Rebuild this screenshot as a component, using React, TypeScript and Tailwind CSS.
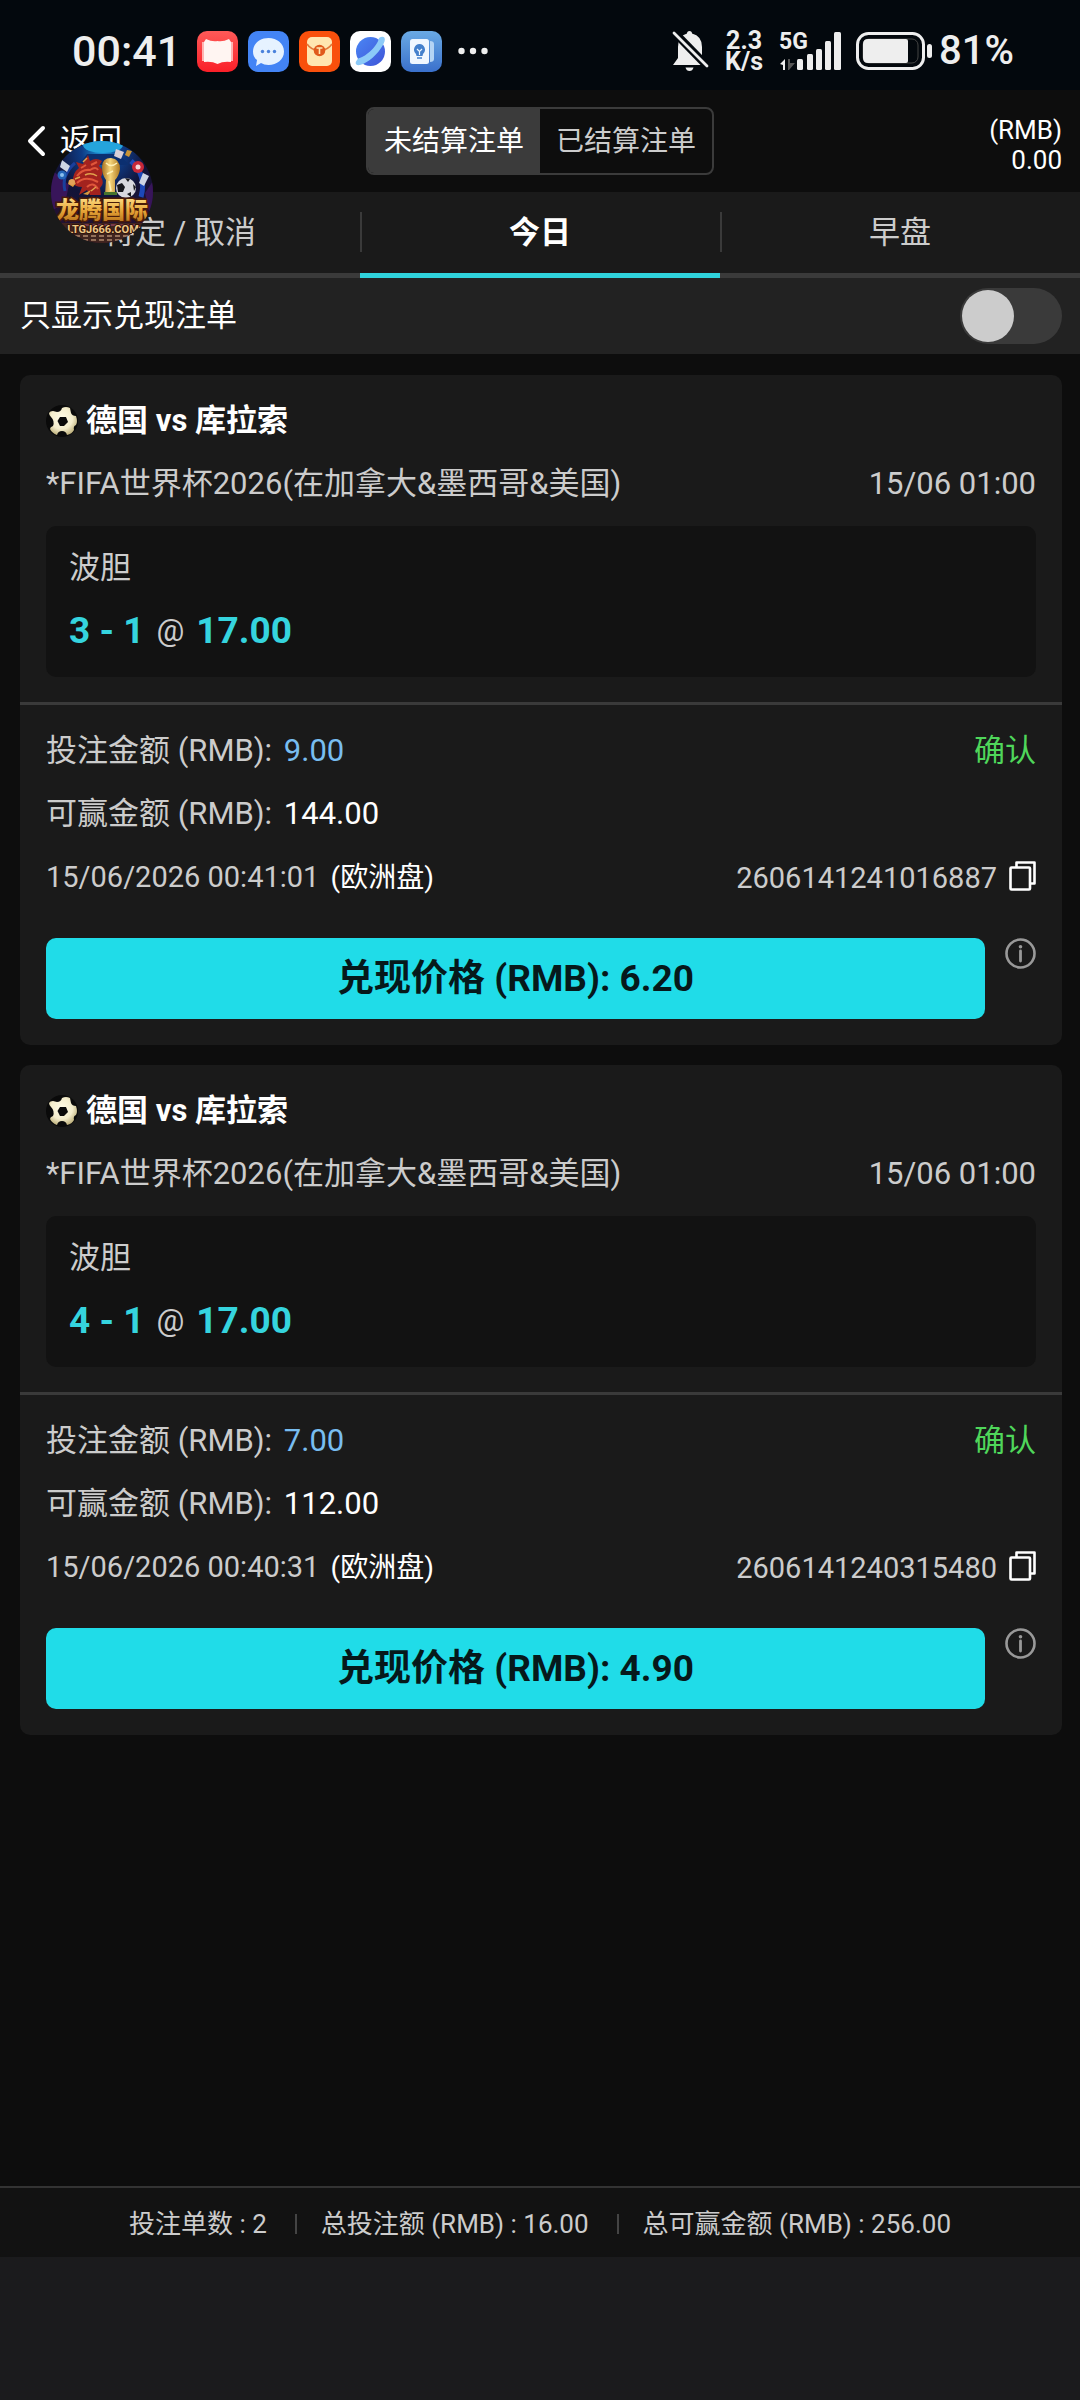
import React, { useState } from "react";

const bets = [
  {
    match: "德国 vs 库拉索",
    league: "*FIFA世界杯2026(在加拿大&墨西哥&美国)",
    kickoff: "15/06 01:00",
    market: "波胆",
    pick: "3 - 1",
    odds: "17.00",
    stake: "9.00",
    toWin: "144.00",
    placedAt: "15/06/2026 00:41:01",
    ticket: "2606141241016887",
    cashout: "6.20",
  },
  {
    match: "德国 vs 库拉索",
    league: "*FIFA世界杯2026(在加拿大&墨西哥&美国)",
    kickoff: "15/06 01:00",
    market: "波胆",
    pick: "4 - 1",
    odds: "17.00",
    stake: "7.00",
    toWin: "112.00",
    placedAt: "15/06/2026 00:40:31",
    ticket: "2606141240315480",
    cashout: "4.90",
  },
];

const tabs = ["待定 / 取消", "今日", "早盘"];

const App = () => {
  const [tab, setTab] = useState(1);

  return (
    <div className="flex min-h-screen flex-col bg-[#0d0d0d] font-['Roboto','Noto_Sans_CJK_SC',sans-serif] text-[31px] leading-[48px] text-[#ccc]">
      <StatusBar />
      <Header />

      {/* tabs */}
      <nav className="grid grid-cols-3 bg-[#1a1a1a]">
        {tabs.map((name, index) => (
          <button
            key={name}
            type="button"
            onClick={() => setTab(index)}
            className={`relative h-[86px] border-b-[5px] ${
              tab === index
                ? "border-[#2fd3dc] font-bold text-white"
                : "border-[#3a3a3a]"
            }`}
          >
            {name}
            {index > 0 && (
              <span className="absolute left-0 top-5 h-10 w-0.5 bg-[#3a3a3a]" />
            )}
          </button>
        ))}
      </nav>

      {/* cash out filter */}
      <div className="flex h-[76px] items-center justify-between bg-[#222] pl-5 pr-[18px] text-white">
        <label htmlFor="cashout-only">只显示兑现注单</label>
        <input
          id="cashout-only"
          type="checkbox"
          role="switch"
          className="h-14 w-[102px] appearance-none rounded-full bg-[#3a3a3a] p-0.5 before:block before:size-[52px] before:rounded-full before:bg-[#ccc] before:content-[''] checked:before:ml-auto"
        />
      </div>

      {/* bets */}
      <main className="flex grow flex-col gap-5 pb-5 pl-5 pr-[18px] pt-[21px]">
        {bets.map((bet) => (
          <BetCard key={bet.ticket} {...bet} />
        ))}
      </main>

      {/* totals */}
      <footer className="flex h-[71px] items-center justify-center border-t-2 border-[#333] bg-[#121212] pt-0.5 text-[26px]">
        <p>投注单数 : 2</p>
        <span className="ml-7 mr-6 h-5 w-0.5 bg-[#444]" />
        <p>总投注额 (RMB) : 16.00</p>
        <span className="ml-7 mr-6 h-5 w-0.5 bg-[#444]" />
        <p>总可赢金额 (RMB) : 256.00</p>
      </footer>
      <div className="h-[143px] bg-[#1b1b1d]" />
    </div>
  );
};

export default App;

const Header = () => {
  return (
    <header className="relative grid h-[102px] grid-cols-3 items-center bg-[#0d0d0d] px-[18px] text-white">
      <button type="button" className="ml-2 flex items-center gap-3.5">
        <svg width="20" height="32" viewBox="0 0 20 32" fill="none">
          <path
            d="M17 3L4 16L17 29"
            stroke="#fff"
            strokeWidth="4"
            strokeLinecap="round"
            strokeLinejoin="round"
          />
        </svg>
        返回
      </button>
      <div className="flex h-[68px] w-[348px] justify-self-center overflow-hidden rounded-lg border-2 border-[#3b3b3b] text-[28px]">
        <button type="button" className="flex-1 bg-[#3b3b3b] pt-0.5">
          未结算注单
        </button>
        <button type="button" className="flex-1 pt-0.5 text-[#ccc]">
          已结算注单
        </button>
      </div>
      <p className="pt-2 text-right text-[26px] leading-[30px]">
        (RMB)
        <br />
        0.00
      </p>
      <div className="absolute left-[51px] top-[51px] z-10">
        <FloatingLogo />
      </div>
    </header>
  );
};

interface Bet {
  match: string;
  league: string;
  kickoff: string;
  market: string;
  pick: string;
  odds: string;
  stake: string;
  toWin: string;
  placedAt: string;
  ticket: string;
  cashout: string;
}

function BetCard({
  match,
  league,
  kickoff,
  market,
  pick,
  odds,
  stake,
  toWin,
  placedAt,
  ticket,
  cashout,
}: Bet) {
  return (
    <section className="rounded-[10px] bg-[#1a1a1a]">
      <div className="flex flex-col gap-[15px] px-[26px] pb-[25px] pt-[22px]">
        <div className="flex items-center gap-2">
          <Ball />
          <h2 className="font-bold text-white">{match}</h2>
        </div>
        <div className="flex justify-between">
          <p>{league}</p>
          <p>{kickoff}</p>
        </div>
        <div className="mt-[3px] flex flex-col gap-[15px] rounded-[10px] bg-[#121212] px-[23px] pb-[22px] pt-[18px]">
          <p>{market}</p>
          <p className="flex items-center gap-3 text-[37px] font-bold text-[#35d4de]">
            {pick}
            <span className="text-[31px] font-normal text-[#ccc]">@</span>
            {odds}
          </p>
        </div>
      </div>

      <div className="flex flex-col gap-[15px] border-t-[3px] border-[#3a3a3a] px-[26px] pb-[26px] pt-[22px]">
        <div className="flex justify-between">
          <p>
            投注金额 (RMB): <span className="ml-1 text-[#78bdf0]">{stake}</span>
          </p>
          <p className="text-[#4fd65a]">确认</p>
        </div>
        <p>
          可赢金额 (RMB): <span className="ml-1 text-white">{toWin}</span>
        </p>
        <div className="flex justify-between text-[29px]">
          <p>
            {placedAt}{" "}
            <span className="ml-1 text-[28px] text-white">(欧洲盘)</span>
          </p>
          <div className="flex items-center gap-3">
            {ticket}
            <button type="button" aria-label="复制">
              <svg
                className="mb-1"
                width="27"
                height="30"
                viewBox="0 0 27 30"
                fill="none"
                stroke="#fff"
                strokeWidth="2.6"
                strokeLinejoin="round"
              >
                <path d="M7.5 6V1.5H25.5V22.5H21" />
                <rect x="1.5" y="6.5" width="19.5" height="22" rx="1" />
              </svg>
            </button>
          </div>
        </div>
        <div className="mt-[21px] flex items-start gap-5">
          <button
            type="button"
            className="h-[81px] grow rounded-[10px] bg-[#20dce8] text-[37px] font-bold text-[#06191b]"
          >
            兑现价格 (RMB): {cashout}
          </button>
          <button type="button" aria-label="说明">
            <svg width="31" height="31" viewBox="0 0 31 31" fill="none">
              <circle cx="15.5" cy="15.5" r="14" stroke="#999" strokeWidth="2.6" />
              <circle cx="15.5" cy="8.8" r="1.8" fill="#999" />
              <path d="M15.5 13V23" stroke="#999" strokeWidth="2.8" strokeLinecap="round" />
            </svg>
          </button>
        </div>
      </div>
    </section>
  );
}

const Ball = () => {
  return (
    <svg width="32" height="32" viewBox="0 0 32 32">
      <defs>
        <radialGradient id="ball" cx="0.45" cy="0.4" r="0.65">
          <stop offset="0" stopColor="#fffbe6" />
          <stop offset="0.6" stopColor="#f4edcc" />
          <stop offset="1" stopColor="#b8aa74" />
        </radialGradient>
      </defs>
      <circle cx="16" cy="16" r="16" fill="#0a0a0a" />
      <path
        d="M3 8Q4 6 7 6L11 7Q15 7 16 3Q20 1 24 3L25 8Q26 11 30 11Q32 17 30 20Q27 21 28 25Q26 29 21 30Q20 26 16 26Q12 26 11 30Q6 28 4 24Q4 22 7 21Q9 16 5 12Q3 10 3 8Z"
        fill="url(#ball)"
      />
      <path d="M14 12H20L22 17L18 21H14L11.500 16Z" fill="#0a0a0a" />
    </svg>
  );
};

const FloatingLogo = () => {
  return (
    <svg width="102" height="102" viewBox="0 0 102 102">
      <defs>
        <radialGradient id="sky" cx="0.5" cy="0.1" r="0.9">
          <stop offset="0" stopColor="#1e94d8" />
          <stop offset="0.22" stopColor="#0e3c86" />
          <stop offset="0.5" stopColor="#111338" />
          <stop offset="1" stopColor="#2a1130" />
        </radialGradient>
        <linearGradient id="gold" x1="0" y1="0" x2="0" y2="1">
          <stop offset="0" stopColor="#ffe08a" />
          <stop offset="0.5" stopColor="#e8a638" />
          <stop offset="1" stopColor="#b06a18" />
        </linearGradient>
        <linearGradient id="cup" x1="0" y1="0" x2="1" y2="0">
          <stop offset="0" stopColor="#a8701c" />
          <stop offset="0.45" stopColor="#f6d67c" />
          <stop offset="1" stopColor="#b07a20" />
        </linearGradient>
        <clipPath id="logoClip">
          <circle cx="51" cy="51" r="51" />
        </clipPath>
      </defs>
      <g clipPath="url(#logoClip)">
        <rect width="102" height="102" fill="url(#sky)" />
        <ellipse cx="52" cy="4" rx="20" ry="8" fill="#25a4dc" />
        <path d="M36 13H68L78 24H28Z" fill="#0b2f70" />
        <path d="M0 28L18 44L14 62L0 70Z" fill="#38155a" />
        <path d="M102 40L94 52L98 70H102Z" fill="#38155a" />
        <path d="M80 20Q96 34 90 56" fill="none" stroke="#1c48b8" strokeWidth="5" />
        <path d="M14 50Q10 34 24 22" fill="none" stroke="#1a3f9c" strokeWidth="3" />
        {/* dragon */}
        <path
          d="M22 42Q21 32 28 27L25 21L32 23L37 14L39 20Q45 16 51 20L48 25Q54 30 50 36Q54 42 49 47L50 54H39L36 49L28 54L31 46Q24 46 22 42Z"
          fill="#a3231e"
        />
        <path
          d="M26 35Q31 28 39 29Q45 25 47 29M26 42Q34 34 47 41M36 46Q42 40 47 48M30 27L35 24M40 24L46 21"
          fill="none"
          stroke="#e0563a"
          strokeWidth="2"
        />
        <path
          d="M34 34Q40 31 46 35M40 50L45 46M24 38L29 36M32 21L36 17"
          fill="none"
          stroke="#e0a24c"
          strokeWidth="1.500"
        />
        <path d="M18 39L25 42L22 46L17 43ZM32 53L40 49L37 54Z" fill="#d79a3e" />
        {/* cards and chips */}
        <path d="M11 19L19 25L16 31L9 26Z" fill="#cdd4e4" />
        <path d="M65 8L73 11L70 18L63 15Z" fill="#d9d0d8" />
        <path d="M92 32L98 35L93 45L88 42Z" fill="#cdd4e4" />
        <path d="M76 9L81 10L78 16L74 14Z" fill="#c99434" />
        <circle cx="87" cy="26" r="6" fill="#c72838" />
        <circle cx="87" cy="26" r="2.500" fill="#f4d6d8" />
        <circle cx="11" cy="34" r="4.500" fill="#2465b8" />
        <circle cx="11" cy="34" r="2" fill="#8cc0ee" />
        <circle cx="21" cy="41" r="3" fill="#e3a35a" />
        {/* trophy */}
        <path
          d="M51 26Q51 17 60 17Q69 18 69 28Q68 35 64 39L64 54H54L55 39Q51 34 51 26Z"
          fill="url(#cup)"
        />
        <path d="M55 22Q60 27 66 22M56 33L62 30M58 40L60 50" fill="none" stroke="#fff0b4" strokeWidth="1.500" />
        <rect x="53" y="51" width="13" height="3" fill="#47742e" />
        {/* football */}
        <circle cx="75" cy="47" r="10" fill="#d8d8de" />
        <path d="M66 44L71 42L74 46L72 51L67 51Z" fill="#17171d" />
        <path d="M74 37L79 38L77 41ZM82 43L85 46L83 50ZM76 53L80 51L80 56Z" fill="#17171d" />
        <rect y="82" width="102" height="20" fill="#40241f" />
        <path d="M18 84H84" stroke="#7a3a4c" strokeWidth="2" />
        <path d="M24 95H80M32 99H70" stroke="#94705a" strokeWidth="2" strokeDasharray="5 3" />
        <text
          x="51"
          y="77"
          textAnchor="middle"
          fontSize="23"
          fontWeight="900"
          fill="url(#gold)"
          stroke="#4a1c08"
          strokeWidth="3"
          paintOrder="stroke"
        >
          龙腾国际
        </text>
        <text
          x="52"
          y="92"
          textAnchor="middle"
          fontSize="11"
          fontWeight="700"
          fill="#eec684"
          stroke="#30130c"
          strokeWidth="2"
          paintOrder="stroke"
        >
          LTGJ666.COM
        </text>
      </g>
    </svg>
  );
};

const StatusBar = () => {
  return (
    <div className="flex h-[90px] items-center justify-between bg-[#03080d] pl-[72px] pr-[66px] pt-3 text-[#eee]">
      <div className="flex items-center gap-2.5">
        <span className="mr-1.5 text-[43px] font-medium">00:41</span>
        <AppIcons />
        <svg className="ml-1.5" width="30" height="8" viewBox="0 0 30 8" fill="#eee">
          <circle cx="3.500" cy="4" r="3.200" />
          <circle cx="15" cy="4" r="3.200" />
          <circle cx="26.500" cy="4" r="3.200" />
        </svg>
      </div>

      <div className="flex items-center">
        {/* muted bell */}
        <svg width="37" height="42" viewBox="0 0 37 42">
          <path
            d="M17.500 1Q20 1 20 3.500Q30 6 30 17V26L34 35H1L6 28V17Q6 6 15 3.500Q15 1 17.500 1Z"
            fill="#eee"
          />
          <path d="M13.500 37.500H21.500Q20.500 41 17.500 41Q14.500 41 13.500 37.500Z" fill="#eee" />
          <path d="M1 1L37 38" stroke="#03080d" strokeWidth="8" />
          <path d="M2 3L35 36" stroke="#eee" strokeWidth="2.800" strokeLinecap="round" />
        </svg>
        <p className="ml-4 text-center text-[25px] leading-[21px] font-bold">
          2.3
          <br />
          K/s
        </p>
        {/* signal */}
        <div className="relative ml-4">
          <svg width="63" height="40" viewBox="0 0 63 40">
            <path d="M1 33L6 28V39H4V34Z" fill="#eee" />
            <path d="M9 28H11V32L16 32L10 39H9Z" fill="#555" />
            <g fill="#eee">
              <rect x="18" y="28" width="6" height="11" rx="1.500" />
              <rect x="28" y="23" width="6" height="16" rx="1.500" />
              <rect x="37" y="18" width="6" height="21" rx="1.500" />
              <rect x="46" y="10" width="6" height="29" rx="1.500" />
              <rect x="55" y="1" width="7" height="38" rx="1.500" />
            </g>
          </svg>
          <span className="absolute left-0 top-0 text-[23px] leading-[21px] font-bold">
            5G
          </span>
        </div>
        {/* battery */}
        <svg className="ml-3.5" width="77" height="38" viewBox="0 0 77 38">
          <rect x="1.500" y="1.500" width="66" height="35" rx="11" fill="none" stroke="#eee" strokeWidth="3" />
          <rect x="7" y="7" width="55" height="24" rx="6" fill="none" stroke="#444" />
          <path d="M12 7H50Q52 7 52 9V29Q52 31 50 31H12Q7 31 7 26V12Q7 7 12 7Z" fill="#eee" />
          <rect x="71" y="12" width="5" height="14" rx="2.500" fill="#eee" />
        </svg>
        <span className="ml-1.5 text-[40px] font-medium">81%</span>
      </div>
    </div>
  );
};

// notification icons of the phone's status bar
const AppIcons = () => {
  return (
    <>
      <svg width="41" height="41" viewBox="0 0 41 41">
        <defs>
          <linearGradient id="red" x1="0" y1="0" x2="0" y2="1">
            <stop offset="0" stopColor="#ff5a58" />
            <stop offset="1" stopColor="#fa1f28" />
          </linearGradient>
        </defs>
        <rect width="41" height="41" rx="10" fill="url(#red)" />
        <path d="M5 11H36V30H5Z" fill="#ffb4b2" />
        <path d="M9 8Q15 11 20.500 10Q26 11 32 8L34 11V31Q26 30 20.500 33Q15 30 7 31V11Z" fill="#fff5f2" />
      </svg>
      <svg width="41" height="41" viewBox="0 0 41 41">
        <rect width="41" height="41" rx="10" fill="#4384f5" />
        <path
          d="M20.500 7C29 7 36 12.500 36 20.500S29 34 20.500 34Q16 34 13 32L8 35L9 29Q5 26 5 20.500C5 12.500 12 7 20.500 7Z"
          fill="#e6f2ff"
        />
        <g fill="#4a82dc">
          <circle cx="14.500" cy="20.500" r="1.700" />
          <circle cx="20.500" cy="20.500" r="1.700" />
          <circle cx="26.500" cy="20.500" r="1.700" />
        </g>
      </svg>
      <svg width="41" height="41" viewBox="0 0 41 41">
        <rect width="41" height="41" rx="10" fill="#f9500c" />
        <rect x="8" y="6" width="25" height="29" rx="5" fill="#ffe6b0" />
        <path d="M8 13Q12 19 20.500 20Q29 19 33 13" fill="none" stroke="#e2783a" strokeWidth="1.600" />
        <circle cx="20.500" cy="19.500" r="5.800" fill="#e05a1c" />
        <path d="M17.500 17H23.500M20.500 17V23" stroke="#ffe6b0" strokeWidth="1.600" />
      </svg>
      <svg width="41" height="41" viewBox="0 0 41 41">
        <defs>
          <linearGradient id="planet" x1="0" y1="0" x2="1" y2="1">
            <stop offset="0" stopColor="#4a86f4" />
            <stop offset="1" stopColor="#3f55d8" />
          </linearGradient>
        </defs>
        <rect width="41" height="41" rx="10" fill="#fff" />
        <circle cx="20.500" cy="20.500" r="14.500" fill="url(#planet)" />
        <path
          d="M29 7C34 4 37 7 33 14C28 23 18 32 10 34C5 35 4 31 9 27C13 27 27 17 29 7Z"
          fill="#8ccaf8"
        />
      </svg>
      <svg width="41" height="41" viewBox="0 0 41 41">
        <defs>
          <linearGradient id="blue" x1="0" y1="0" x2="0" y2="1">
            <stop offset="0" stopColor="#6aaae4" />
            <stop offset="1" stopColor="#3a70cc" />
          </linearGradient>
        </defs>
        <rect width="41" height="41" rx="10" fill="url(#blue)" />
        <path d="M29 10Q33 10 33 13V28Q33 31 29 31Z" fill="#b4d4f4" />
        <rect x="9" y="8" width="19" height="25" rx="2.500" fill="#f0f7ff" />
        <path d="M18.500 13A5.700 5.700 0 0 1 22 23L21.500 25H15.500L15 23A5.700 5.700 0 0 1 18.500 13Z" fill="#4480cc" />
        <path d="M16 18L18.500 20.500L21 18M18.500 20.500V24" fill="none" stroke="#f0f7ff" strokeWidth="1.200" />
        <path d="M16 27H21" stroke="#4480cc" strokeWidth="1.500" />
      </svg>
    </>
  );
};
